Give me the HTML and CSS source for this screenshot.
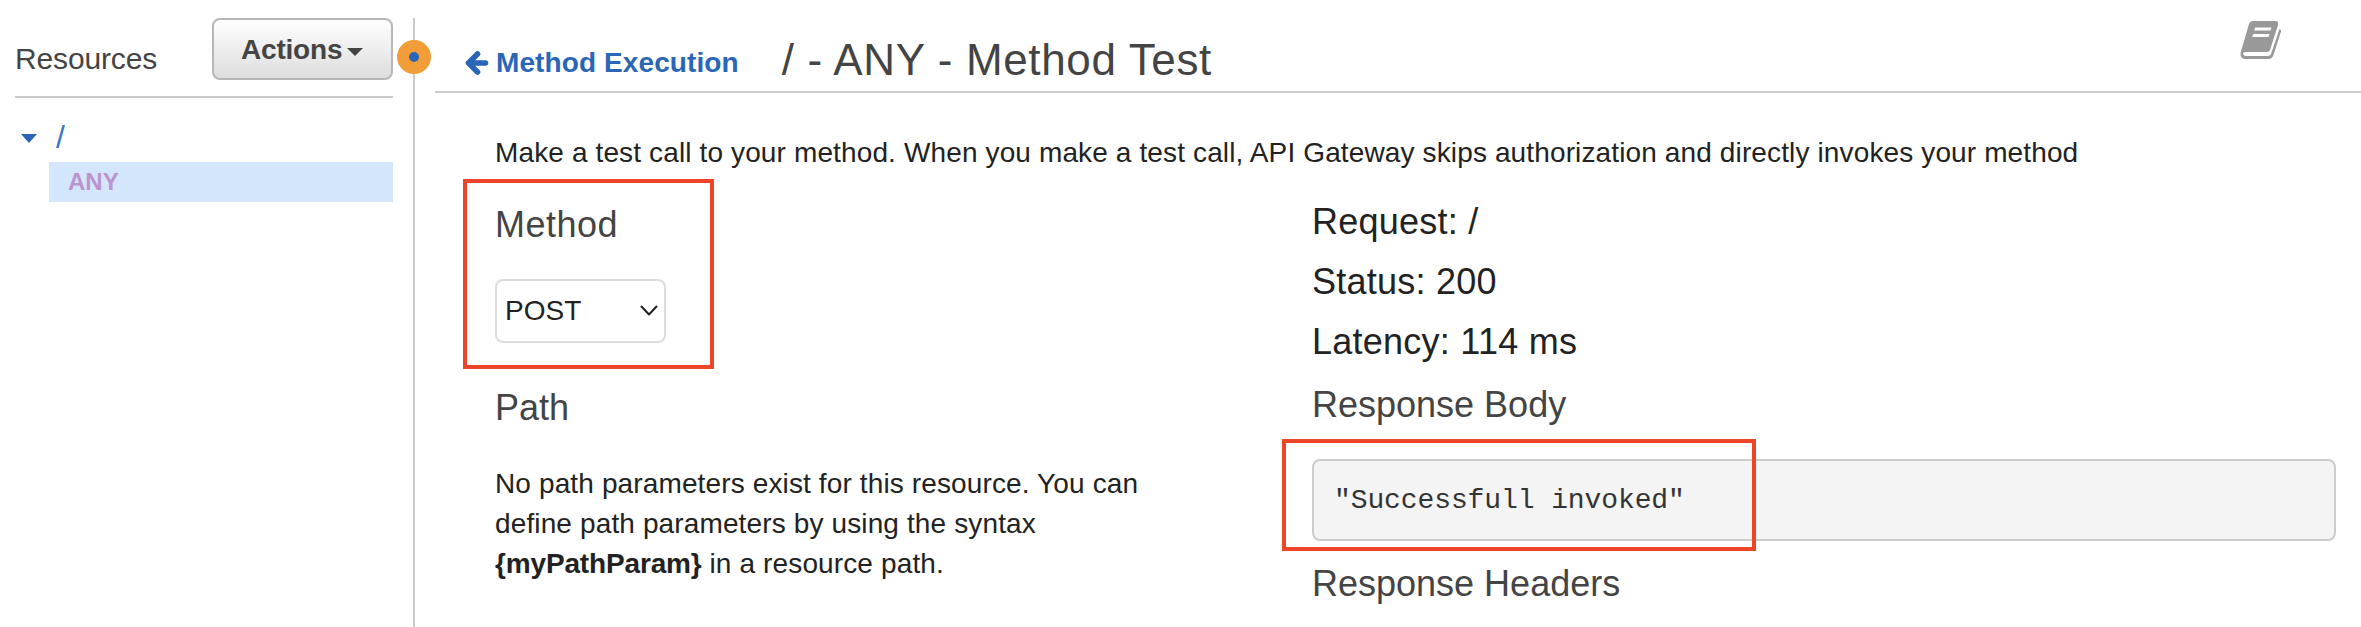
FILE: index.html
```html
<!DOCTYPE html>
<html lang="en">
<head>
    <meta charset="UTF-8">
    <meta name="viewport" content="width=device-width, initial-scale=1.0">
    <title>API Gateway - Method Test</title>
    <link rel="stylesheet" href="styles.css">
</head>
<body>
    <div class="layout">
        <aside class="sidebar">
            <div class="sidebar-header">
                <h2>Resources</h2>
                <button type="button" class="actions">Actions<span class="caret"></span></button>
            </div>
            <div class="tree-root">
                <span class="tree-arrow"></span>
                <span class="slash">/</span>
            </div>
            <div class="tree-item">ANY</div>
        </aside>

        <div class="splitter"><span class="handle"></span></div>

        <main>
            <header class="main-header">
                <a class="back" href="#">
                    <svg width="24" height="26" viewBox="0 0 24 26" fill="none" stroke="#2a66b8" stroke-width="5.6" stroke-linecap="round" stroke-linejoin="round">
                        <path d="M12.500 4L3.500 13l9 9M5 13h15.500"/>
                    </svg>
                    <span>Method Execution</span>
                </a>
                <h1>/ - ANY - Method Test</h1>
                <svg class="book" width="42" height="40" viewBox="0 0 42 40">
                    <path fill="#999" d="M13 1h22q4 0 3 4l-8 25q-1 2-3 2H6q-3 0-3 1.500Q3.500 36 6 36h22q2 0 3-2L39.500 9q2.500 1 1 4l-7 22q-1.500 4-5 4H6q-6 0-5.500-6L9 4q1-3 4-3z"/>
                    <path fill="#fff" d="M15.200 7.500h16.300l-1 3H14.200zM13.200 14h16.300l-1 3H12.200z"/>
                </svg>
            </header>

            <div class="content">
                <p class="intro">Make a test call to your method. When you make a test call, API Gateway skips authorization and directly invokes your method</p>
                <div class="columns">
                    <section class="request">
                        <div class="method">
                            <h3>Method</h3>
                            <div class="select">
                                <span>POST</span>
                                <svg width="18" height="12" viewBox="0 0 18 12" fill="none" stroke="#222" stroke-width="2" stroke-linecap="round" stroke-linejoin="round"><path d="M1.500 1.500L9 9.500l7.500-8"/></svg>
                            </div>
                            <div class="highlight highlight-method"></div>
                        </div>
                        <h3>Path</h3>
                        <p class="path-text">No path parameters exist for this resource. You can<br>define path parameters by using the syntax<br><b>{myPathParam}</b> in a resource path.</p>
                    </section>

                    <section class="response">
                        <div class="info">Request: /</div>
                        <div class="info">Status: 200</div>
                        <div class="info">Latency: 114 ms</div>
                        <h3>Response Body</h3>
                        <div class="body-wrapper">
                            <pre>"Successfull invoked"</pre>
                            <div class="highlight highlight-body"></div>
                        </div>
                        <h3>Response Headers</h3>
                    </section>
                </div>
            </div>
        </main>
    </div>
</body>
</html>
```
FILE: styles.css
```css
* {
    box-sizing: border-box;
}

body {
    margin: 0;
    font-family: "Liberation Sans", Arial, sans-serif;
    font-size: 28px;
    line-height: 40px;
    color: #222;
    background-color: #fff;
}

h1, h2, h3, p, pre {
    margin: 0;
    font-weight: normal;
}

h1, h2, h3 {
    color: #444;
}

.layout {
    display: flex;
    height: 627px;
    overflow: hidden;
}

/* Sidebar */
.sidebar {
    width: 393px;
    padding: 18px 0 0 15px;
}

.sidebar-header {
    display: flex;
    justify-content: space-between;
    height: 80px;
    border-bottom: 2px solid #ccc;
}

.sidebar-header h2 {
    padding-top: 21px;
    font-size: 30px;
    letter-spacing: -0.15px;
}

.actions {
    display: flex;
    align-items: center;
    width: 181px;
    height: 62px;
    padding: 1px 0 0 27px;
    border: 2px solid #b7b7b7;
    border-radius: 8px;
    background: linear-gradient(#fff, #ddd);
    font-family: inherit;
    font-size: 28px;
    font-weight: bold;
    letter-spacing: -0.2px;
    color: #444;
}

.caret {
    margin: 4px 0 0 5px;
    border: 8px solid transparent;
    border-top: 8px solid #444;
    border-bottom: 0;
}

.tree-root {
    display: flex;
    align-items: center;
    gap: 19px;
    height: 64px;
    padding: 17px 0 0 6px;
}

.slash {
    margin-top: -3px;
    font-size: 32px;
    color: #3c78c0;
}

.tree-arrow {
    margin-top: -1px;
    border: 8.5px solid transparent;
    border-top: 9px solid #2a66b8;
    border-bottom: 0;
}

.tree-item {
    height: 40px;
    margin-left: 34px;
    padding-left: 19px;
    background-color: #d4e6fc;
    font-size: 24px;
    font-weight: bold;
    line-height: 40px;
    color: #bc93d1;
}

/* Splitter */
.splitter {
    position: relative;
    width: 2px;
    margin: 18px 20px 0;
    background-color: #ccc;
}

.handle {
    position: absolute;
    top: 22px;
    left: -16px;
    width: 34px;
    height: 34px;
    border: 12px solid #f29d38;
    border-radius: 50%;
    background-color: #2a66b8;
}

/* Main */
main {
    flex: 1;
}

.main-header {
    display: flex;
    height: 93px;
    padding-left: 30px;
    border-bottom: 2px solid #ccc;
}

.back {
    display: flex;
    align-items: center;
    gap: 7px;
    height: 40px;
    margin-top: 43px;
    font-weight: bold;
    letter-spacing: 0.1px;
    color: #2a66b8;
    text-decoration: none;
}

.main-header h1 {
    margin: 35px 0 0 43px;
    font-size: 44px;
    line-height: 50px;
    letter-spacing: 0.65px;
}

.book {
    margin: 20px 79px 0 auto;
}

.content {
    padding: 40px 25px 0 60px;
}

.intro,
.path-text {
    letter-spacing: 0.13px;
}

.columns {
    display: grid;
    grid-template-columns: 817px 1fr;
}

h3 {
    font-size: 36px;
    line-height: 48px;
}

.request {
    padding-top: 28px;
}

.method {
    position: relative;
    margin-bottom: 41px;
}

.method h3 {
    letter-spacing: 0.5px;
}

.select {
    display: flex;
    align-items: center;
    justify-content: space-between;
    width: 171px;
    height: 64px;
    margin-top: 30px;
    padding: 0 6px 0 8px;
    border: 2px solid #ddd;
    border-radius: 8px;
}

.path-text {
    margin-top: 32px;
}

.path-text b {
    letter-spacing: -0.15px;
}

.response {
    padding-top: 19px;
}

.info {
    font-size: 36px;
    line-height: 60px;
    letter-spacing: 0.25px;
}

.info + h3 {
    margin-top: 9px;
}

.body-wrapper {
    position: relative;
    margin: 30px 0 19px;
}

pre {
    height: 82px;
    padding: 20px;
    border: 2px solid #ccc;
    border-radius: 8px;
    background-color: #f4f4f4;
    font-family: "Liberation Mono", "Courier New", monospace;
    letter-spacing: -0.1px;
    color: #333;
}

/* Red callout boxes */
.highlight {
    position: absolute;
    border: 4px solid #ee4427;
}

.highlight-method {
    top: -22px;
    left: -32px;
    width: 251px;
    height: 190px;
}

.highlight-body {
    top: -20px;
    left: -30px;
    width: 474px;
    height: 112px;
}
```
